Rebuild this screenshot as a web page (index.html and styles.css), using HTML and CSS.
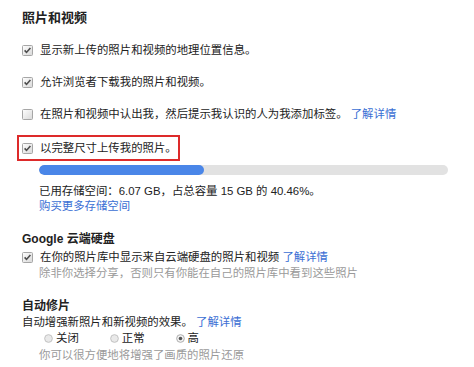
FILE: index.html
```html
<!DOCTYPE html>
<html lang="zh-CN">
<head>
<meta charset="utf-8">
<link rel="stylesheet" href="styles.css">
</head>
<body>
<div class="page">
  <h2 class="title">照片和视频</h2>
  <div class="options">
    <div class="opt">
      <svg class="cb" viewBox="0 0 11 11"><defs><linearGradient id="g1" x1="0" y1="0" x2="1" y2="1"><stop offset="0" stop-color="#ffffff"/><stop offset="1" stop-color="#d8d8d8"/></linearGradient></defs><rect x="0.5" y="0.5" width="10" height="10" rx="1" fill="url(#g1)" stroke="#a6a6a6"/><path d="M2.6 5.4 L4.5 7.4 L8.4 2.9" fill="none" stroke="#4d4d4d" stroke-width="1.6"/></svg>
      <span>显示新上传的照片和视频的地理位置信息。</span>
    </div>
    <div class="opt">
      <svg class="cb" viewBox="0 0 11 11"><rect x="0.5" y="0.5" width="10" height="10" rx="1" fill="url(#g1)" stroke="#a6a6a6"/><path d="M2.6 5.4 L4.5 7.4 L8.4 2.9" fill="none" stroke="#4d4d4d" stroke-width="1.6"/></svg>
      <span>允许浏览者下载我的照片和视频。</span>
    </div>
    <div class="opt">
      <svg class="cb" viewBox="0 0 11 11"><rect x="0.5" y="0.5" width="10" height="10" rx="1" fill="url(#g1)" stroke="#a6a6a6"/></svg>
      <span>在照片和视频中认出我，然后提示我认识的人为我添加标签。 <a class="link" href="#">了解详情</a></span>
    </div>
    <div class="opt highlight">
      <svg class="cb" viewBox="0 0 11 11"><rect x="0.5" y="0.5" width="10" height="10" rx="1" fill="url(#g1)" stroke="#a6a6a6"/><path d="M2.6 5.4 L4.5 7.4 L8.4 2.9" fill="none" stroke="#4d4d4d" stroke-width="1.6"/></svg>
      <span>以完整尺寸上传我的照片。</span>
    </div>
  </div>
  <div class="bar"><div class="bar-fill" style="width: 40.46%"></div></div>
  <p class="storage">已用存储空间：6.07 GB，占总容量 15 GB 的 40.46%。</p>
  <a class="link buy" href="#">购买更多存储空间</a>

  <h3 class="subtitle">Google 云端硬盘</h3>
  <div class="opt drive">
    <svg class="cb" viewBox="0 0 11 11"><rect x="0.5" y="0.5" width="10" height="10" rx="1" fill="url(#g1)" stroke="#a6a6a6"/><path d="M2.6 5.4 L4.5 7.4 L8.4 2.9" fill="none" stroke="#4d4d4d" stroke-width="1.6"/></svg>
    <span>在你的照片库中显示来自云端硬盘的照片和视频 <a class="link" href="#">了解详情</a></span>
  </div>
  <p class="hint">除非你选择分享，否则只有你能在自己的照片库中看到这些照片</p>

  <h3 class="subtitle">自动修片</h3>
  <p class="desc">自动增强新照片和新视频的效果。 <a class="link" href="#">了解详情</a></p>
  <div class="radios">
    <label class="radio"><svg class="rd" viewBox="0 0 10 10"><circle cx="5" cy="5" r="4.3" fill="#e9e9e9" stroke="#bdbdbd"/></svg>关闭</label>
    <label class="radio"><svg class="rd" viewBox="0 0 10 10"><circle cx="5" cy="5" r="4.3" fill="#e9e9e9" stroke="#bdbdbd"/></svg>正常</label>
    <label class="radio"><svg class="rd" viewBox="0 0 10 10"><circle cx="5" cy="5" r="4.3" fill="#f2f2f2" stroke="#a8a8a8"/><circle cx="5" cy="5" r="2" fill="#555"/></svg>高</label>
  </div>
  <p class="hint note">你可以很方便地将增强了画质的照片还原</p>
</div>
</body>
</html>
```
FILE: styles.css
```css
html, body {
  margin: 0;
  padding: 0;
  background: #ffffff;
}
body {
  font-family: "Liberation Sans", "Noto Sans CJK SC", sans-serif;
  font-size: 11.4px;
  color: #222222;
}
.page {
  padding: 10px 0 0 22px;
}
.title {
  margin: 0;
  font-size: 13px;
  line-height: 16px;
  font-weight: bold;
}
.options {
  display: flex;
  flex-direction: column;
  align-items: flex-start;
  margin-top: 16px;
}
.opt {
  display: flex;
  align-items: center;
  gap: 7px;
  line-height: 17px;
}
.opt + .opt {
  margin-top: 15px;
}
.opt + .highlight {
  margin-top: 12px;
}
.highlight {
  margin-left: -5px;
  border: 2px solid #dd2a2a;
  padding: 2.5px 1px 2.5px 3px;
}
.cb {
  width: 11px;
  height: 11px;
  flex: none;
}
.link {
  color: #3b6fd4;
  text-decoration: none;
}
.bar {
  margin: 4px 0 0 17px;
  width: 409px;
  height: 10px;
  border-radius: 5px;
  background: #e2e2e2;
  overflow: hidden;
}
.bar-fill {
  height: 100%;
  border-radius: 5px;
  background: #4a86e8;
}
.storage {
  margin: 9px 0 0 17px;
  line-height: 15px;
}
.buy {
  display: block;
  margin-left: 17px;
  line-height: 15px;
}
.subtitle {
  margin: 17px 0 0 0;
  font-size: 12px;
  line-height: 16px;
  font-weight: bold;
}
.drive {
  margin-top: 2px;
  line-height: 16px;
}
.hint {
  margin: 0 0 0 17px;
  line-height: 16px;
  color: #9a9a9a;
}
.desc {
  margin: 0;
  line-height: 16px;
}
.radios {
  display: flex;
  gap: 31px;
  margin-left: 22px;
  line-height: 16px;
}
.radio {
  display: flex;
  align-items: center;
  gap: 3px;
}
.rd {
  width: 9px;
  height: 9px;
  flex: none;
}
.note {
  margin-top: 1px;
}
```
